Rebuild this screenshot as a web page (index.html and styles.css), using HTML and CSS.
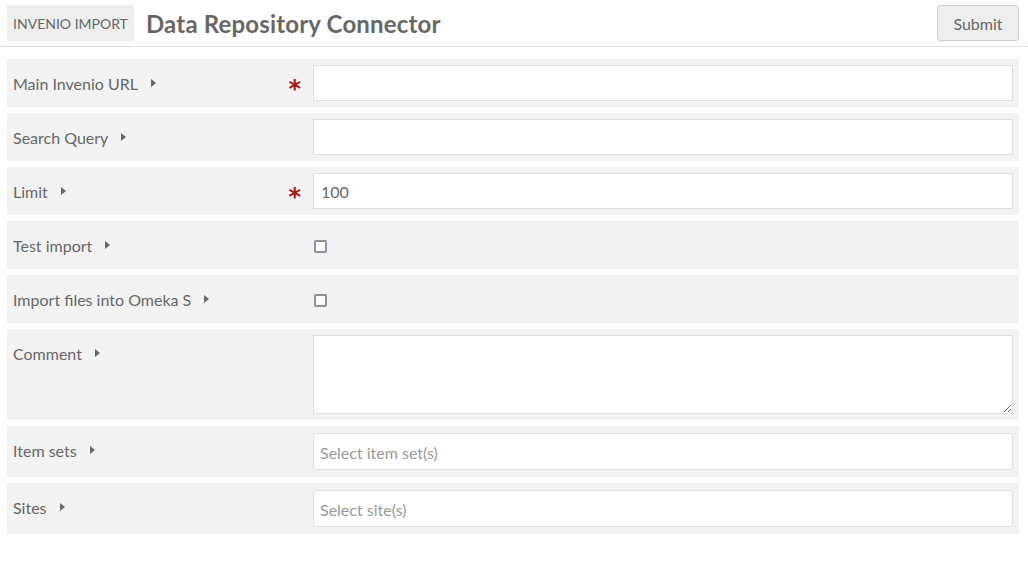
FILE: index.html
```html
<!DOCTYPE html>
<html>
<head>
<meta charset="utf-8">
<link rel="stylesheet" href="styles.css">
</head>
<body>
<header class="top">
  <div class="crumb">INVENIO IMPORT</div>
  <h1 class="title">Data Repository Connector</h1>
  <button class="submit">Submit</button>
</header>
<form class="form">
  <div class="field">
    <div class="label"><span>Main Invenio URL</span><i class="arrow"></i><b class="req">*</b></div>
    <div class="control"><input class="text" type="text"></div>
  </div>
  <div class="field">
    <div class="label"><span>Search Query</span><i class="arrow"></i></div>
    <div class="control"><input class="text" type="text"></div>
  </div>
  <div class="field">
    <div class="label"><span>Limit</span><i class="arrow"></i><b class="req">*</b></div>
    <div class="control"><input class="text" type="text" value="100"></div>
  </div>
  <div class="field">
    <div class="label"><span>Test import</span><i class="arrow"></i></div>
    <div class="control check"><span class="box"></span></div>
  </div>
  <div class="field">
    <div class="label"><span>Import files into Omeka S</span><i class="arrow"></i></div>
    <div class="control check"><span class="box"></span></div>
  </div>
  <div class="field">
    <div class="label"><span>Comment</span><i class="arrow"></i></div>
    <div class="control"><textarea class="area"></textarea></div>
  </div>
  <div class="field sel">
    <div class="label"><span>Item sets</span><i class="arrow"></i></div>
    <div class="control"><div class="select">Select item set(s)</div></div>
  </div>
  <div class="field sel">
    <div class="label"><span>Sites</span><i class="arrow"></i></div>
    <div class="control"><div class="select">Select site(s)</div></div>
  </div>
</form>
</body>
</html>
```
FILE: styles.css
```css
* { box-sizing: border-box; }
html, body { margin: 0; padding: 0; background: #fff; }
body {
  font-family: Lato, "Open Sans", sans-serif;
  color: #676767;
  font-size: 16px;
}
.top {
  display: flex;
  align-items: center;
  height: 47px;
  padding: 5px 9px 5px 7px;
  border-bottom: 1px solid #dfdfdf;
}
.crumb {
  background: #eeeeee;
  height: 36px;
  width: 127px;
  display: flex;
  align-items: center;
  justify-content: center;
  font-size: 14px;
  color: #676767;
}
.title {
  margin: 0 0 0 12px;
  font-size: 24px;
  letter-spacing: 0.17px;
  font-weight: 700;
  color: #676767;
  flex: 1;
  line-height: 36px;
  padding-top: 2px;
}
.submit {
  font-family: Lato, sans-serif;
  font-size: 16px;
  color: #676767;
  background: #eeeeee;
  border: 1px solid #cfcfcf;
  border-radius: 3px;
  height: 36px;
  width: 82px;
  padding: 0;
}
.form {
  padding: 12px 9px 0 7px;
  display: flex;
  flex-direction: column;
  gap: 6px;
}
.field {
  background: #f3f3f3;
  display: flex;
  padding: 6px;
  min-height: 48px;
}
.field.sel { padding: 7px 6px; }
.label {
  width: 300px;
  flex: none;
  display: flex;
  align-items: center;
  height: 36px;
  line-height: 20px;
  padding-top: 2px;
}
.sel .label { padding-top: 0; }
.arrow {
  display: inline-block;
  width: 0; height: 0;
  border-top: 4.5px solid transparent;
  border-bottom: 4.5px solid transparent;
  border-left: 5px solid #676767;
  margin-left: 13px;
  margin-top: -2px;
}
.req {
  margin-left: auto;
  margin-right: 12px;
  color: #a91919;
  font-size: 24px;
  font-weight: 700;
  line-height: 20px;
  height: 20px;
  padding-top: 5px;
  font-family: "DejaVu Sans", sans-serif;
}
.control { flex: 1; display: flex; align-items: center; }
.text {
  width: 100%;
  height: 36px;
  border: 1px solid #dfdfdf;
  background: #fff;
  font-family: Lato, sans-serif;
  font-size: 16px;
  color: #676767;
  padding: 1px 7px 0;
  outline: none;
}
.check { height: 36px; }
.box {
  display: block;
  width: 13px; height: 13px;
  border: 2px solid #8f8f9d;
  border-radius: 2px;
  background: #fff;
  margin-left: 1px;
  margin-top: 2px;
}
.area {
  width: 100%;
  height: 79px;
  border: 1px solid #dfdfdf;
  background: #fff;
  font-family: Lato, sans-serif;
  resize: vertical;
  display: block;
}
.control:has(.area) { align-items: flex-start; }
.select {
  width: 100%;
  height: 37px;
  border: 1px solid #dfdfdf;
  border-radius: 3px;
  background: #fff;
  color: #999;
  font-size: 16px;
  display: flex;
  align-items: center;
  padding: 1px 6px 0;
}
```
